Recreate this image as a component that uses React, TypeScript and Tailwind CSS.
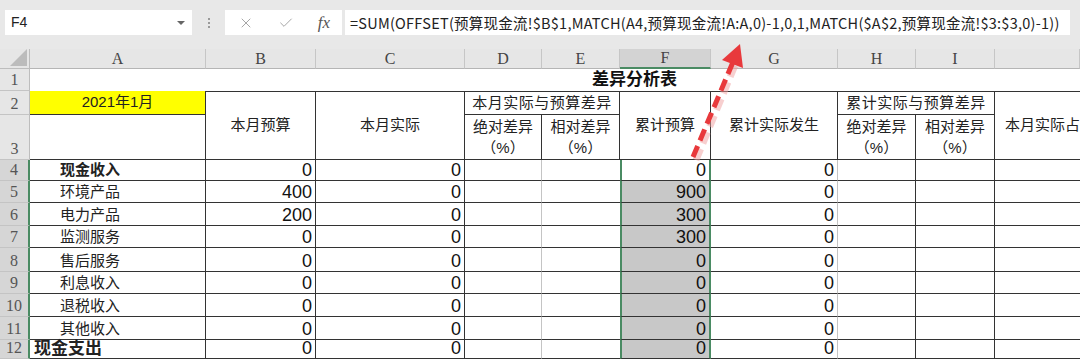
import { Check, X } from "lucide-react"

const cols = ["A", "B", "C", "D", "E", "F", "G", "H", "I", ""]

const dark = "border-[#333333]"
const cellFont = { fontFamily: '"Liberation Sans", "Noto Sans CJK SC", sans-serif' }

const rows = [
  { n: 4, label: "现金收入", bold: true, b: "0", f: "0" },
  { n: 5, label: "环境产品", b: "400", f: "900" },
  { n: 6, label: "电力产品", b: "200", f: "300" },
  { n: 7, label: "监测服务", b: "0", f: "300" },
  { n: 8, label: "售后服务", b: "0", f: "0" },
  { n: 9, label: "利息收入", b: "0", f: "0" },
  { n: 10, label: "退税收入", b: "0", f: "0" },
  { n: 11, label: "其他收入", b: "0", f: "0" },
  { n: 12, label: "现金支出", bold: true, top: true, b: "0", f: "0" },
]

function RowHead({ n, active }: { n: number; active?: boolean }) {
  return (
    <div
      className={`flex items-end justify-center pb-[1px] text-[16px] leading-[18px] text-[#555] border-b border-[#c4c4c4] ${
        active ? "bg-[#d6d6d6] border-r-2 border-r-[#4a8b63]" : "bg-[#e6e6e6] border-r border-r-[#bdbdbd]"
      }`}
      style={{ fontFamily: '"Liberation Serif", serif' }}
    >
      {n}
    </div>
  )
}

function Num({ v, cls = "" }: { v: string; cls?: string }) {
  return (
    <div className={`flex items-end justify-end pr-[3px] text-[18px] leading-[20px] text-[#111] border-b ${dark} ${cls}`}>
      {v}
    </div>
  )
}

function Pct({ title, cls }: { title: string; cls: string }) {
  return (
    <div className={`flex flex-col items-center justify-center text-[15px] leading-[21px] text-[#222] ${cls}`}>
      <span>{title}</span>
      <span>（%）</span>
    </div>
  )
}

export default function App() {
  return (
    <div className="w-[1080px] h-[359px] overflow-hidden bg-white relative" style={cellFont}>
      {/* formula bar */}
      <div className="h-[49px] bg-[#e8e8e8] flex items-start pt-[10px]">
        <div className="ml-[5px] w-[187px] h-[25px] bg-white flex items-center pl-[6px] pr-[7px] text-[14px] text-[#222]">
          <span className="flex-1">F4</span>
          <span className="w-0 h-0 border-l-[4px] border-r-[4px] border-t-[4px] border-l-transparent border-r-transparent border-t-[#666]" />
        </div>
        <div className="w-[33px] h-[25px] flex flex-col items-center justify-center gap-[2px]">
          <span className="w-[2px] h-[2px] bg-[#9a9a9a]" />
          <span className="w-[2px] h-[2px] bg-[#9a9a9a]" />
          <span className="w-[2px] h-[2px] bg-[#9a9a9a]" />
        </div>
        <div className="w-[117px] h-[25px] bg-white flex items-center justify-between pl-[13px] pr-[12px]">
          <X className="w-[16px] h-[16px] text-[#a6a6a6]" strokeWidth={1.5} />
          <Check className="w-[16px] h-[16px] text-[#a6a6a6]" strokeWidth={1.5} />
          <span className="italic text-[17px] text-[#555]" style={{ fontFamily: '"Liberation Serif", serif' }}>
            fx
          </span>
        </div>
        <div
          className="ml-[3px] w-[725px] h-[25px] bg-white flex items-center pl-[5px] text-[14.5px] text-[#222] whitespace-nowrap tracking-[0.25px]"
          style={{ fontFamily: '"Noto Sans CJK SC", sans-serif' }}
        >
          =SUM(OFFSET(预算现金流!$B$1,MATCH(A4,预算现金流!A:A,0)-1,0,1,MATCH($A$2,预算现金流!$3:$3,0)-1))
        </div>
      </div>

      {/* sheet */}
      <div className="grid grid-cols-[30px_176px_110px_149px_77px_78px_91px_127px_78px_79px_85px] grid-rows-[20px_22px_24px_45px_21px_22px_23px_22px_24px_22px_23px_23px_19px] text-[#222]">
        {/* column headers */}
        <div className="bg-[#e6e6e6] border-b border-r border-[#bdbdbd] flex items-end justify-end pr-[2px] pb-[2px]">
          <svg width="17" height="17" viewBox="0 0 17 17">
            <polygon points="17,0 17,17 0,17" fill="#bcbcbc" />
          </svg>
        </div>
        {cols.map((c) => (
          <div
            key={c || "J"}
            className={`flex items-center justify-center text-[16px] text-[#444] border-r border-[#c6c6c6] ${
              c === "F" ? "bg-[#d3d3d3] border-b-2 border-b-[#4a8b63]" : "bg-[#e6e6e6] border-b border-b-[#b5b5b5]"
            }`}
            style={{ fontFamily: '"Liberation Serif", serif' }}
          >
            {c}
          </div>
        ))}

        {/* row 1 */}
        <RowHead n={1} />
        <div className="col-span-10 flex items-center pl-[562px] text-[17px] font-bold text-[#111]">差异分析表</div>

        {/* row 2 */}
        <RowHead n={2} />
        <div className={`bg-[#ffff00] flex items-center justify-center text-[15px] border-r border-b ${dark}`}>2021年1月</div>
        <div className={`row-span-2 flex items-center justify-center text-[15px] border-t border-r border-b ${dark}`}>本月预算</div>
        <div className={`row-span-2 flex items-center justify-center text-[15px] border-t border-r border-b ${dark}`}>本月实际</div>
        <div className={`col-span-2 flex items-center justify-center text-[15px] tracking-[0.5px] border-t border-r border-b ${dark}`}>
          本月实际与预算差异
        </div>
        <div className={`row-span-2 flex items-center justify-center text-[15px] border-t border-r border-b ${dark}`}>累计预算</div>
        <div className={`row-span-2 flex items-center justify-center text-[15px] border-t border-r border-b ${dark}`}>累计实际发生</div>
        <div className={`col-span-2 flex items-center justify-center text-[15px] tracking-[0.5px] border-t border-r border-b ${dark}`}>
          累计实际与预算差异
        </div>
        <div className={`row-span-2 flex items-center pl-[10px] text-[15px] whitespace-nowrap overflow-hidden border-t border-b ${dark}`}>
          本月实际占比
        </div>

        {/* row 3 */}
        <RowHead n={3} />
        <div className={`border-r border-b ${dark}`} />
        <Pct title="绝对差异" cls={`border-r border-b ${dark}`} />
        <Pct title="相对差异" cls={`border-r border-b ${dark}`} />
        <Pct title="绝对差异" cls={`border-r border-b ${dark}`} />
        <Pct title="相对差异" cls={`border-r border-b ${dark}`} />

        {/* data rows */}
        {rows.map((r) => (
          <div key={r.n} className="contents">
            <RowHead n={r.n} active />
            <div
              className={`flex items-end whitespace-nowrap border-r border-b ${dark} ${
                r.top ? "pl-[4px] text-[17px] leading-[19px] font-bold" : "pl-[30px] text-[15px] leading-[20px]"
              } ${r.bold && !r.top ? "font-bold" : ""}`}
            >
              {r.label}
            </div>
            <Num v={r.b} cls={`border-r ${dark}`} />
            <Num v="0" cls={`border-r ${dark}`} />
            <div className={`border-b ${dark} border-r border-r-[#c4c4c4]`} />
            <div className={`border-b ${dark}`} />
            <Num
              v={r.f}
              cls={`border-l-2 border-r-2 border-l-[#4a8b63] border-r-[#4a8b63] ${r.n === 4 ? "bg-white" : "bg-[#c8c8c8]"}`}
            />
            <Num v="0" cls="border-r border-r-[#c4c4c4]" />
            <div className={`border-b border-r ${dark}`} />
            <div className={`border-b border-r ${dark}`} />
            <div className={`border-b ${dark}`} />
          </div>
        ))}
      </div>

      {/* red dashed arrow */}
      <svg className="absolute left-0 top-0 pointer-events-none" width="1080" height="359">
        <line
          x1="695"
          y1="158"
          x2="734"
          y2="63"
          stroke="#f0a0a0"
          strokeOpacity="0.5"
          strokeWidth="7"
          strokeDasharray="12 6"
          transform="translate(1 2)"
        />
        <line x1="693" y1="157" x2="733" y2="62" stroke="#e8393c" strokeWidth="5" strokeDasharray="12 6" />
        <polygon points="740,44 743,68 722,60" fill="#e8393c" />
      </svg>
    </div>
  )
}
